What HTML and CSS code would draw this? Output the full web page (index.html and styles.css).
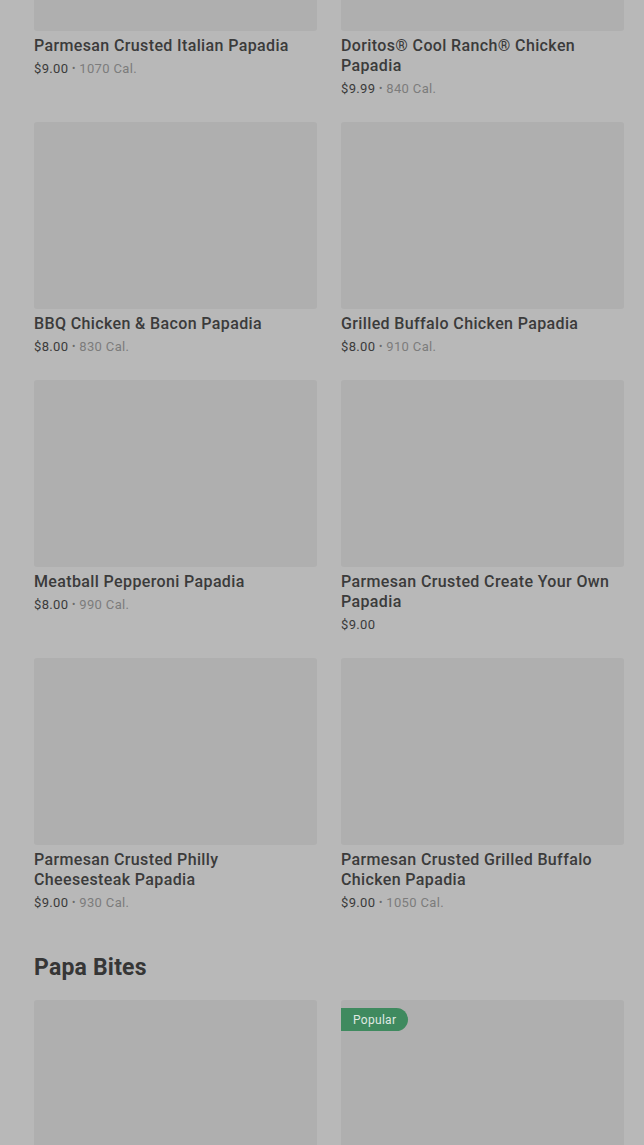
FILE: index.html
```html
<!DOCTYPE html>
<html>
<head>
<meta charset="utf-8">
<link rel="stylesheet" href="styles.css">
</head>
<body>
<main class="page">
  <section class="menu-section scrolled">
    <div class="grid">
      <div class="card">
        <div class="thumb"></div>
        <div class="name">Parmesan Crusted Italian Papadia</div>
        <div class="meta"><span class="price">$9.00</span> <span class="sep">•</span> <span class="cal">1070 Cal.</span></div>
      </div>
      <div class="card">
        <div class="thumb"></div>
        <div class="name">Doritos® Cool Ranch® Chicken Papadia</div>
        <div class="meta"><span class="price">$9.99</span> <span class="sep">•</span> <span class="cal">840 Cal.</span></div>
      </div>
      <div class="card">
        <div class="thumb"></div>
        <div class="name">BBQ Chicken &amp; Bacon Papadia</div>
        <div class="meta"><span class="price">$8.00</span> <span class="sep">•</span> <span class="cal">830 Cal.</span></div>
      </div>
      <div class="card">
        <div class="thumb"></div>
        <div class="name">Grilled Buffalo Chicken Papadia</div>
        <div class="meta"><span class="price">$8.00</span> <span class="sep">•</span> <span class="cal">910 Cal.</span></div>
      </div>
      <div class="card">
        <div class="thumb"></div>
        <div class="name">Meatball Pepperoni Papadia</div>
        <div class="meta"><span class="price">$8.00</span> <span class="sep">•</span> <span class="cal">990 Cal.</span></div>
      </div>
      <div class="card">
        <div class="thumb"></div>
        <div class="name">Parmesan Crusted Create Your Own Papadia</div>
        <div class="meta"><span class="price">$9.00</span></div>
      </div>
      <div class="card">
        <div class="thumb"></div>
        <div class="name">Parmesan Crusted Philly Cheesesteak Papadia</div>
        <div class="meta"><span class="price">$9.00</span> <span class="sep">•</span> <span class="cal">930 Cal.</span></div>
      </div>
      <div class="card">
        <div class="thumb"></div>
        <div class="name">Parmesan Crusted Grilled Buffalo Chicken Papadia</div>
        <div class="meta"><span class="price">$9.00</span> <span class="sep">•</span> <span class="cal">1050 Cal.</span></div>
      </div>
    </div>
  </section>
  <section class="menu-section">
    <h2 class="section-title">Papa Bites</h2>
    <div class="grid">
      <div class="card">
        <div class="thumb"></div>
      </div>
      <div class="card">
        <div class="thumb"><span class="badge">Popular</span></div>
      </div>
    </div>
  </section>
</main>
</body>
</html>
```
FILE: styles.css
```css
* { box-sizing: border-box; }
html, body {
  margin: 0;
  padding: 0;
  background: #b8b8b8;
  overflow: hidden;
}
body {
  font-family: Roboto, "Liberation Sans", sans-serif;
  color: #3b3b3b;
}
.page {
  padding: 0 20px 0 34px;
  height: 1145px;
  overflow: hidden;
}
.scrolled {
  margin-top: -156px;
}
.grid {
  display: grid;
  grid-template-columns: 283px 283px;
  column-gap: 24px;
  row-gap: 24px;
}
.card {
  display: flex;
  flex-direction: column;
}
.thumb {
  position: relative;
  height: 187px;
  background: #afafaf;
  border-radius: 3px;
}
.name {
  margin-top: 5px;
  font-size: 16px;
  line-height: 20px;
  font-weight: 500;
  letter-spacing: 0.37px;
  color: #3b3b3b;
}
.meta {
  margin-top: 3px;
  height: 19px;
  font-size: 13px;
  line-height: 20px;
  letter-spacing: 0.35px;
  color: #3b3b3b;
  white-space: nowrap;
}
.sep {
  color: #6a6a6a;
  font-size: 10px;
  line-height: 10px;
  vertical-align: 1px;
}
.cal { color: #7c7c7c; }
.section-title {
  margin: 40px 0 16px;
  font-size: 23px;
  line-height: 32px;
  font-weight: 700;
  color: #363636;
  letter-spacing: 0.2px;
}
.badge {
  position: absolute;
  top: 8px;
  left: 0;
  height: 23px;
  padding: 0 12px;
  display: flex;
  align-items: center;
  background: #3f8a5f;
  color: #dfe9e2;
  font-size: 12px;
  letter-spacing: 0.3px;
  border-radius: 0 12px 12px 0;
}
```
